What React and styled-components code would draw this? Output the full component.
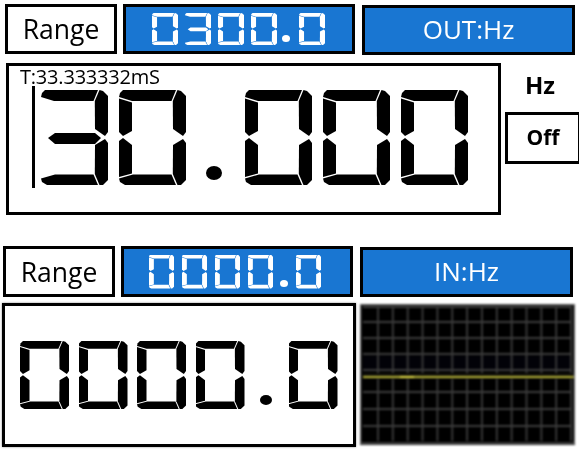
import React from 'react';
import styled, { createGlobalStyle } from 'styled-components';

const Global = createGlobalStyle`
  html, body { margin: 0; padding: 0; background: #fff; }
  body { font-family: "Open Sans", "Noto Sans", "Liberation Sans", sans-serif; color: #000; }
`;

const pts = (list) =>
  `polygon(${list.map(([x, y]) => `${((x / 67) * 100).toFixed(2)}% ${((y / 95) * 100).toFixed(2)}%`).join(',')})`;

const SEGMENTS = {
  a: pts([[4, 0], [57, 0], [52.5, 11], [13, 11], [0, 7], [1, 3]]),
  b: pts([[58.5, 0], [62, 1], [67, 6], [67, 42], [64, 46], [54, 39], [53.8, 11]]),
  c: pts([[54, 55], [64, 49], [67, 53], [67, 90], [62, 95], [58.5, 95], [53.8, 84]]),
  d: pts([[0, 88.5], [14, 84.5], [52.5, 84.5], [57, 95], [6, 95], [1, 92]]),
  e: pts([[0, 51], [4, 48], [13, 55], [13, 83.5], [0, 87]]),
  f: pts([[0, 8.5], [13, 12.5], [13, 41], [4, 46], [0, 42]]),
  g: pts([[7, 48], [14, 43], [54, 43], [60, 48], [54, 54], [14, 54]]),
};

const DIGIT_MAP = { 0: 'abcdef', 3: 'abcdg' };

const Page = styled.div`
  width: 579px;
  height: 450px;
  overflow: hidden;
  display: flex;
  flex-direction: column;
  filter: blur(0.3px);
`;

const Section = styled.section`
  display: flex;
  flex-direction: column;
  padding-left: ${(p) => p.$left}px;
  padding-top: ${(p) => p.$top}px;
`;

const HeaderRow = styled.div`
  display: flex;
`;

const Box = styled.div`
  box-sizing: border-box;
  flex: none;
  border: 3px solid #000;
  display: flex;
  align-items: center;
`;

const RangeBox = styled(Box)`
  width: 112px;
  height: ${(p) => p.$h}px;
  justify-content: center;
  font-size: 26.5px;
  background: #fff;
`;

const BlueReadout = styled(Box)`
  width: 232px;
  height: ${(p) => p.$h}px;
  margin-left: 6px;
  background: #1976d2;
  padding-left: ${(p) => p.$pad}px;
`;

const TitleBox = styled(Box)`
  width: 213px;
  height: 50px;
  margin: 1px 0 0 7px;
  padding-bottom: 2px;
  justify-content: center;
  background: #1976d2;
  color: #fff;
  font-size: 26px;
`;

const Readout = styled.div`
  display: flex;
  gap: ${(p) => p.$gap}px;
`;

const Digit = styled.div`
  position: relative;
  display: flex;
  align-items: center;
  justify-content: center;
  width: ${(p) => p.$w}px;
  height: ${(p) => p.$h}px;
  flex: none;
  color: transparent;
  font-size: ${(p) => Math.round(p.$w * 0.9)}px;
  line-height: 1;
`;

const Segment = styled.i`
  position: absolute;
  inset: 0;
  background: ${(p) => p.$color};
  clip-path: ${(p) => SEGMENTS[p.$seg]};
`;

const DotMark = styled.div`
  flex: none;
  align-self: flex-end;
  width: ${(p) => p.$w}px;
  height: ${(p) => p.$h}px;
  margin: 0 ${(p) => p.$mr}px ${(p) => p.$mb}px ${(p) => p.$ml}px;
  border-radius: 50%;
  background: ${(p) => p.$color};
  color: transparent;
  font-size: ${(p) => p.$h}px;
  line-height: ${(p) => p.$h}px;
  text-align: center;
`;

const MainRow = styled.div`
  display: flex;
  margin-top: ${(p) => p.$gap}px;
`;

const OutPanel = styled(Box)`
  width: 495px;
  height: 152px;
  margin-left: 1px;
  flex-direction: column;
  align-items: flex-start;
  background: #fff;
`;

const PeriodLabel = styled.div`
  height: 20px;
  line-height: 21px;
  padding-left: 11px;
  font-size: 20px;
  letter-spacing: -0.2px;
  white-space: nowrap;
`;

const OutDisplay = styled.div`
  display: flex;
  align-items: flex-start;
  padding-left: 23px;
`;

const Cursor = styled.div`
  width: 3px;
  height: 102px;
  background: #000;
  margin-right: 6px;
  flex: none;
`;

const OutDigits = styled.div`
  margin-top: 4px;
`;

const Side = styled.div`
  display: flex;
  flex: none;
  flex-direction: column;
  margin-left: 4px;
`;

const UnitLabel = styled.div`
  height: 49px;
  padding: 0 6px 7px 0;
  box-sizing: border-box;
  display: flex;
  align-items: center;
  justify-content: center;
  font-size: 24px;
  font-weight: 700;
`;

const OffButton = styled(Box)`
  width: 76px;
  height: 52px;
  padding-bottom: 2px;
  justify-content: center;
  font-size: 21px;
  font-weight: 700;
`;

const InPanel = styled(Box)`
  width: 354px;
  height: 144px;
  margin-left: -1px;
  padding-left: 15px;
  background: #fff;
  box-shadow: 0 0 2px #888;
`;

const Scope = styled.svg`
  display: block;
  flex: none;
  width: 215px;
  height: 141px;
  margin: 1px 0 0 4px;
  filter: blur(0.85px);
`;

const Display = ({ value, w, h, gap, color, dot }) => (
  <Readout $gap={gap} aria-label={value}>
    {[...value].map((ch, i) =>
      ch === '.' ? (
        <DotMark key={i} $color={color} $w={dot.w} $h={dot.h} $ml={dot.ml} $mr={dot.mr} $mb={dot.mb}>
          .
        </DotMark>
      ) : (
        <Digit key={i} $w={w} $h={h}>
          {ch}
          {[...DIGIT_MAP[ch]].map((s) => (
            <Segment key={s} $seg={s} $color={color} />
          ))}
        </Digit>
      ),
    )}
  </Readout>
);

const VLINES = Array.from({ length: 14 }, (_, i) => 18 + i * 14.85);
const HLINES = [3, 18, 34, 50, 66, 88, 105, 122];

const Oscilloscope = () => (
  <Scope viewBox="0 0 215 141">
    <rect x="0" y="0" width="215" height="141" fill="#000" />
    <rect x="3" y="52" width="208" height="14" fill="#020208" />
    {VLINES.map((x) => (
      <line key={x} x1={x} y1="3" x2={x} y2="137" stroke="#3c3c3c" strokeWidth="1.8" />
    ))}
    {HLINES.map((y) => (
      <line key={y} x1="3" y1={y} x2="212" y2={y} stroke="#3c3c3c" strokeWidth="1.8" />
    ))}
    <rect x="3" y="69" width="212" height="6" fill="#12110a" />
    <line x1="3" y1="73" x2="215" y2="73" stroke="#f0ec48" strokeWidth="1.3" />
    <line x1="40" y1="73" x2="54" y2="73" stroke="#fff84e" strokeWidth="1.6" />
    <rect x="0.5" y="0.5" width="214" height="139" fill="none" stroke="#666" strokeWidth="1.6" />
  </Scope>
);

export default function App() {
  return (
    <Page>
      <Global />
      <Section $left={5} $top={4}>
        <HeaderRow>
          <RangeBox $h={50}>Range</RangeBox>
          <BlueReadout $h={50} $pad={26}>
            <Display value="0300.0" w={26} h={32} gap={7} color="#fff" dot={{ w: 8, h: 7, ml: -2, mr: 2, mb: 3 }} />
          </BlueReadout>
          <TitleBox>OUT:Hz</TitleBox>
        </HeaderRow>
        <MainRow $gap={8}>
          <OutPanel>
            <PeriodLabel>T:33.333332mS</PeriodLabel>
            <OutDisplay>
              <Cursor />
              <OutDigits>
                <Display value="30.000" w={67} h={95} gap={11} color="#000" dot={{ w: 16, h: 14, ml: 9, mr: 12, mb: 5 }} />
              </OutDigits>
            </OutDisplay>
          </OutPanel>
          <Side>
            <UnitLabel>Hz</UnitLabel>
            <OffButton>Off</OffButton>
          </Side>
        </MainRow>
      </Section>
      <Section $left={3} $top={31}>
        <HeaderRow>
          <RangeBox $h={51}>Range</RangeBox>
          <BlueReadout $h={51} $pad={25}>
            <Display value="0000.0" w={25} h={34} gap={8} color="#fff" dot={{ w: 8, h: 7, ml: -1, mr: 0, mb: 2 }} />
          </BlueReadout>
          <TitleBox>IN:Hz</TitleBox>
        </HeaderRow>
        <MainRow $gap={6}>
          <InPanel>
            <Display value="0000.0" w={49} h={68} gap={9.5} color="#000" dot={{ w: 12, h: 10, ml: 5.5, mr: 7.5, mb: 4 }} />
          </InPanel>
          <Oscilloscope />
        </MainRow>
      </Section>
    </Page>
  );
}
